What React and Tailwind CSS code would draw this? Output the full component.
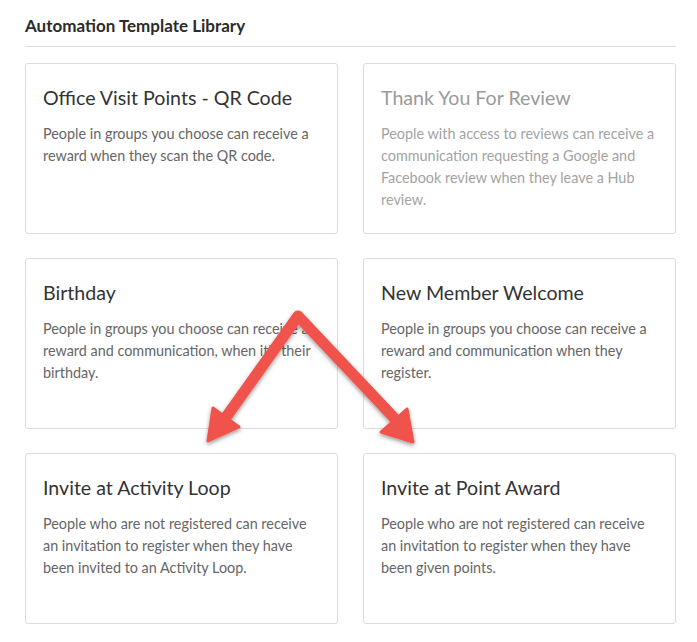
import React from "react";

const templates = [
  {
    title: "Office Visit Points - QR Code",
    text: "People in groups you choose can receive a reward when they scan the QR code.",
  },
  {
    title: "Thank You For Review",
    text: "People with access to reviews can receive a communication requesting a Google and Facebook review when they leave a Hub review.",
    disabled: true,
  },
  {
    title: "Birthday",
    text: "People in groups you choose can receive a reward and communication, when it's their birthday.",
  },
  {
    title: "New Member Welcome",
    text: "People in groups you choose can receive a reward and communication when they register.",
  },
  {
    title: "Invite at Activity Loop",
    text: "People who are not registered can receive an invitation to register when they have been invited to an Activity Loop.",
  },
  {
    title: "Invite at Point Award",
    text: "People who are not registered can receive an invitation to register when they have been given points.",
  },
];

const TemplateCard = ({ title, text, disabled }) => (
  <div className="h-[171px] rounded-[3px] border border-[#dcdcdc] bg-white pl-[17px] pr-4 pt-5">
    <h3
      className={
        "text-[19.6px] leading-[28px] " +
        (disabled ? "text-[#9a9a9a]" : "text-[#333333]")
      }
    >
      {title}
    </h3>
    <p
      className={
        "mt-[11px] text-[14.4px] leading-[22px] " +
        (disabled ? "text-[#a3a3a3]" : "text-[#666666]")
      }
    >
      {text}
    </p>
  </div>
);

// red callout arrows drawn over the grid
const Arrows = () => (
  <svg
    className="pointer-events-none absolute left-0 top-0"
    width="697"
    height="642"
    viewBox="0 0 697 642"
  >
    <defs>
      <filter id="arrowShadow" x="-20%" y="-20%" width="140%" height="140%">
        <feDropShadow dx="0" dy="2" stdDeviation="2" floodColor="#000" floodOpacity="0.4" />
      </filter>
    </defs>
    <g filter="url(#arrowShadow)" fill="#f0524b" stroke="#f0524b" strokeLinecap="round" strokeLinejoin="round">
      <path d="M224 420 L298 316 L398 422" fill="none" strokeWidth="11" />
      <path d="M208 441 L213 408 L239 427 Z" strokeWidth="3" />
      <path d="M413 442 L407 409 L381 432 Z" strokeWidth="3" />
    </g>
  </svg>
);

export default function App() {
  return (
    <div className="relative h-[642px] w-[697px] bg-white font-['Lato',sans-serif]">
      <div className="pl-[25px] pr-[21px] pt-[14px]">
        <h2 className="border-b border-[#dedede] pb-2 text-[17px] font-bold leading-6 text-[#2b2b2b]">
          Automation Template Library
        </h2>
        <div className="mt-4 grid grid-cols-2 gap-x-[25px] gap-y-[24px]">
          {templates.map((t) => (
            <TemplateCard key={t.title} {...t} />
          ))}
        </div>
      </div>
      <Arrows />
    </div>
  );
}
